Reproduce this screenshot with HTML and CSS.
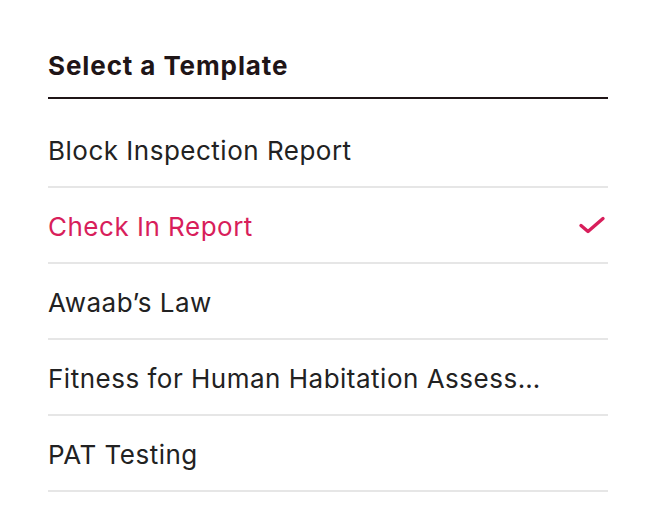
FILE: index.html
```html
<!DOCTYPE html>
<html>
<head>
<meta charset="utf-8">
<link rel="stylesheet" href="styles.css">
</head>
<body>
<div class="panel">
  <h2 class="title">Select a Template</h2>
  <ul class="list">
    <li class="item">Block Inspection Report</li>
    <li class="item selected">Check In Report
      <svg class="check" width="28" height="20" viewBox="0 0 28 20"><path d="M3 10.5 L10 16.5 L25 3.5" fill="none" stroke="#d81e5b" stroke-width="3.4" stroke-linecap="round" stroke-linejoin="round"/></svg>
    </li>
    <li class="item">Awaab’s Law</li>
    <li class="item">Fitness for Human Habitation Assess…</li>
    <li class="item">PAT Testing</li>
  </ul>
</div>
</body>
</html>
```
FILE: styles.css
```css
html, body {
  margin: 0;
  padding: 0;
  background: #ffffff;
}
body {
  font-family: Inter, "Liberation Sans", sans-serif;
  color: #1f1c1c;
}
.panel {
  width: 560px;
  padding: 48px 48px 0 48px;
}
.title {
  margin: 0;
  font-size: 26px;
  font-weight: 700;
  letter-spacing: 0.9px;
  line-height: 36px;
  color: #1f1517;
  padding-bottom: 13px;
  border-bottom: 2px solid #1f1517;
}
.list {
  list-style: none;
  margin: 0;
  padding: 13px 0 0 0;
}
.item {
  height: 74px;
  box-sizing: border-box;
  padding-top: 3px;
  border-bottom: 2px solid #e6e6e6;
  height: 76px;
  display: flex;
  align-items: center;
  justify-content: space-between;
  font-size: 26px;
  letter-spacing: 0.5px;
  color: #222222;
}
.item.selected {
  color: #d81e5b;
}
.check {
  display: block;
  margin-right: 2px;
  margin-top: -3px;
}
```
